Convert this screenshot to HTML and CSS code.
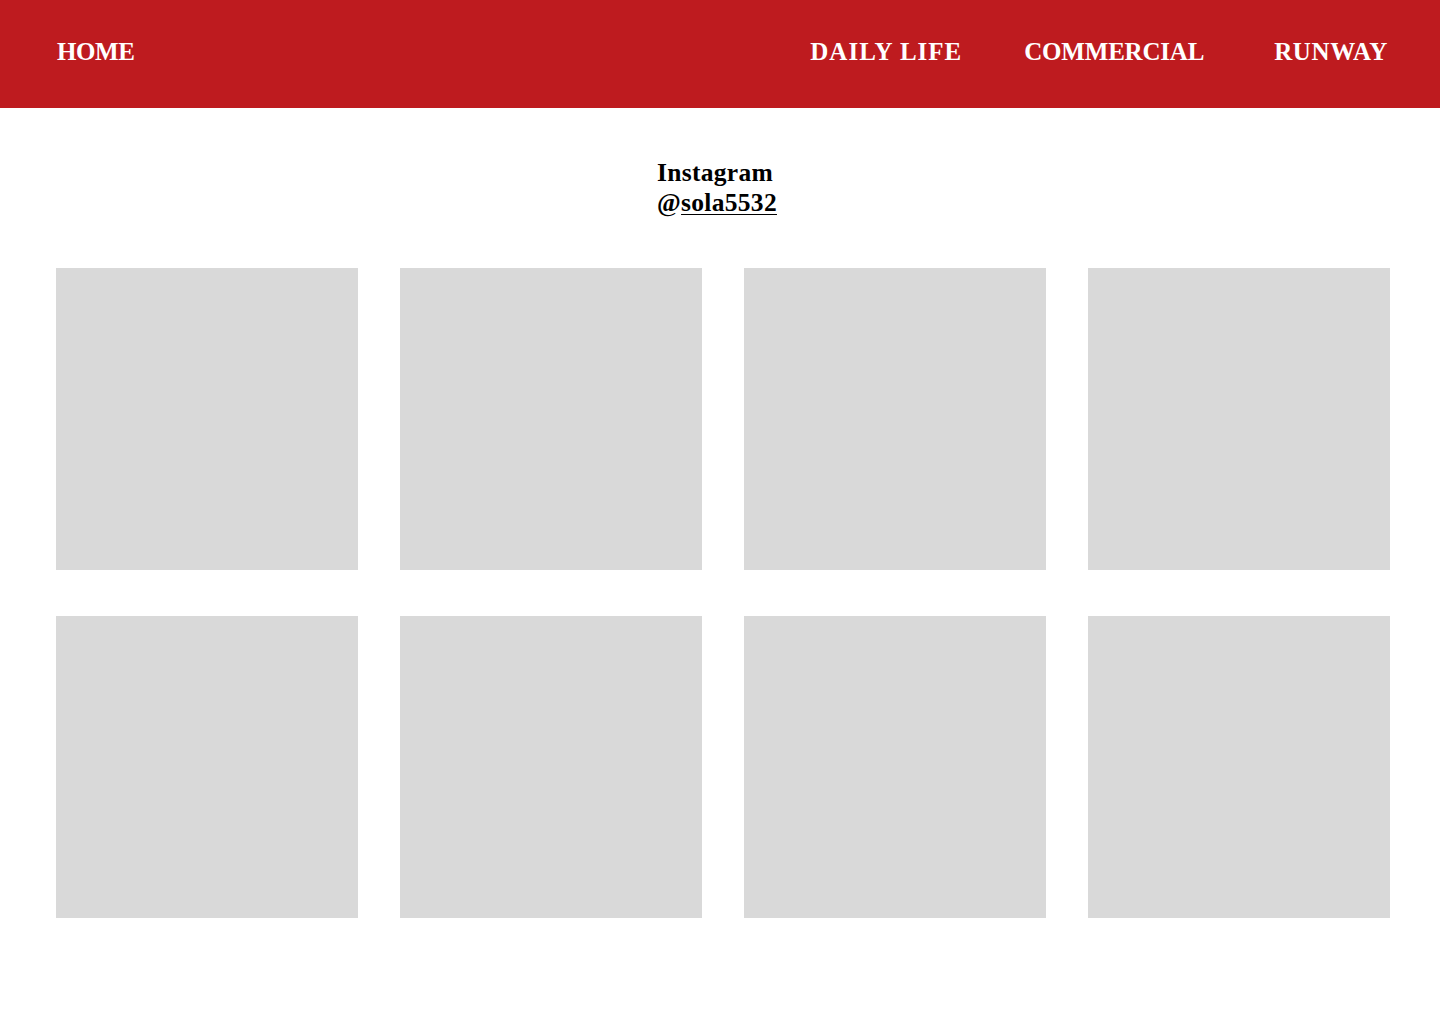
FILE: index.html
```html
<!DOCTYPE html>
<html lang="en">
<head>
<meta charset="utf-8">
<title>Instagram</title>
<link rel="stylesheet" href="styles.css">
</head>
<body>
<header class="topbar">
  <a class="nav-link home" href="#">HOME</a>
  <nav class="nav-right">
    <a class="nav-link daily" href="#">DAILY LIFE</a>
    <a class="nav-link commercial" href="#">COMMERCIAL</a>
    <a class="nav-link runway" href="#">RUNWAY</a>
  </nav>
</header>
<main class="content">
  <div class="handle">
    <div class="handle-text">
      <div>Instagram</div>
      <div>@<a class="handle-link" href="#">sola5532</a></div>
    </div>
  </div>
  <section class="grid">
    <div class="tile"></div>
    <div class="tile"></div>
    <div class="tile"></div>
    <div class="tile"></div>
    <div class="tile"></div>
    <div class="tile"></div>
    <div class="tile"></div>
    <div class="tile"></div>
  </section>
</main>
</body>
</html>
```

FILE: styles.css
```css
* { box-sizing: border-box; }
html, body { margin: 0; padding: 0; background: #fff; }
body { font-family: "Liberation Serif", "Times New Roman", serif; font-weight: bold; color: #000; }

.topbar {
  height: 108px;
  background: #be1b1f;
  display: flex;
  align-items: center;
  justify-content: space-between;
  padding: 0 52px 6px 57px;
}
.nav-link {
  color: #fff;
  text-decoration: none;
  font-size: 25px;
  letter-spacing: 0.4px;
  line-height: 1;
}
.home { letter-spacing: -0.4px; }
.nav-right { display: flex; align-items: center; }
.daily { letter-spacing: 1px; }
.commercial { margin-left: 62px; letter-spacing: -0.2px; }
.runway { margin-left: 70px; letter-spacing: 0.6px; }

.content { padding: 50px 50px 0 56px; }
.handle { display: flex; justify-content: center; padding-right: 12px; }
.handle-text { font-size: 25.5px; line-height: 30px; letter-spacing: 0.3px; }
.handle-link { color: #000; text-decoration: underline; text-underline-offset: 3px; text-decoration-thickness: 1px; }

.grid {
  margin-top: 50px;
  display: grid;
  grid-template-columns: repeat(4, 302px);
  column-gap: 42px;
  row-gap: 46px;
}
.tile { width: 302px; height: 302px; background: #d9d9d9; }
```
